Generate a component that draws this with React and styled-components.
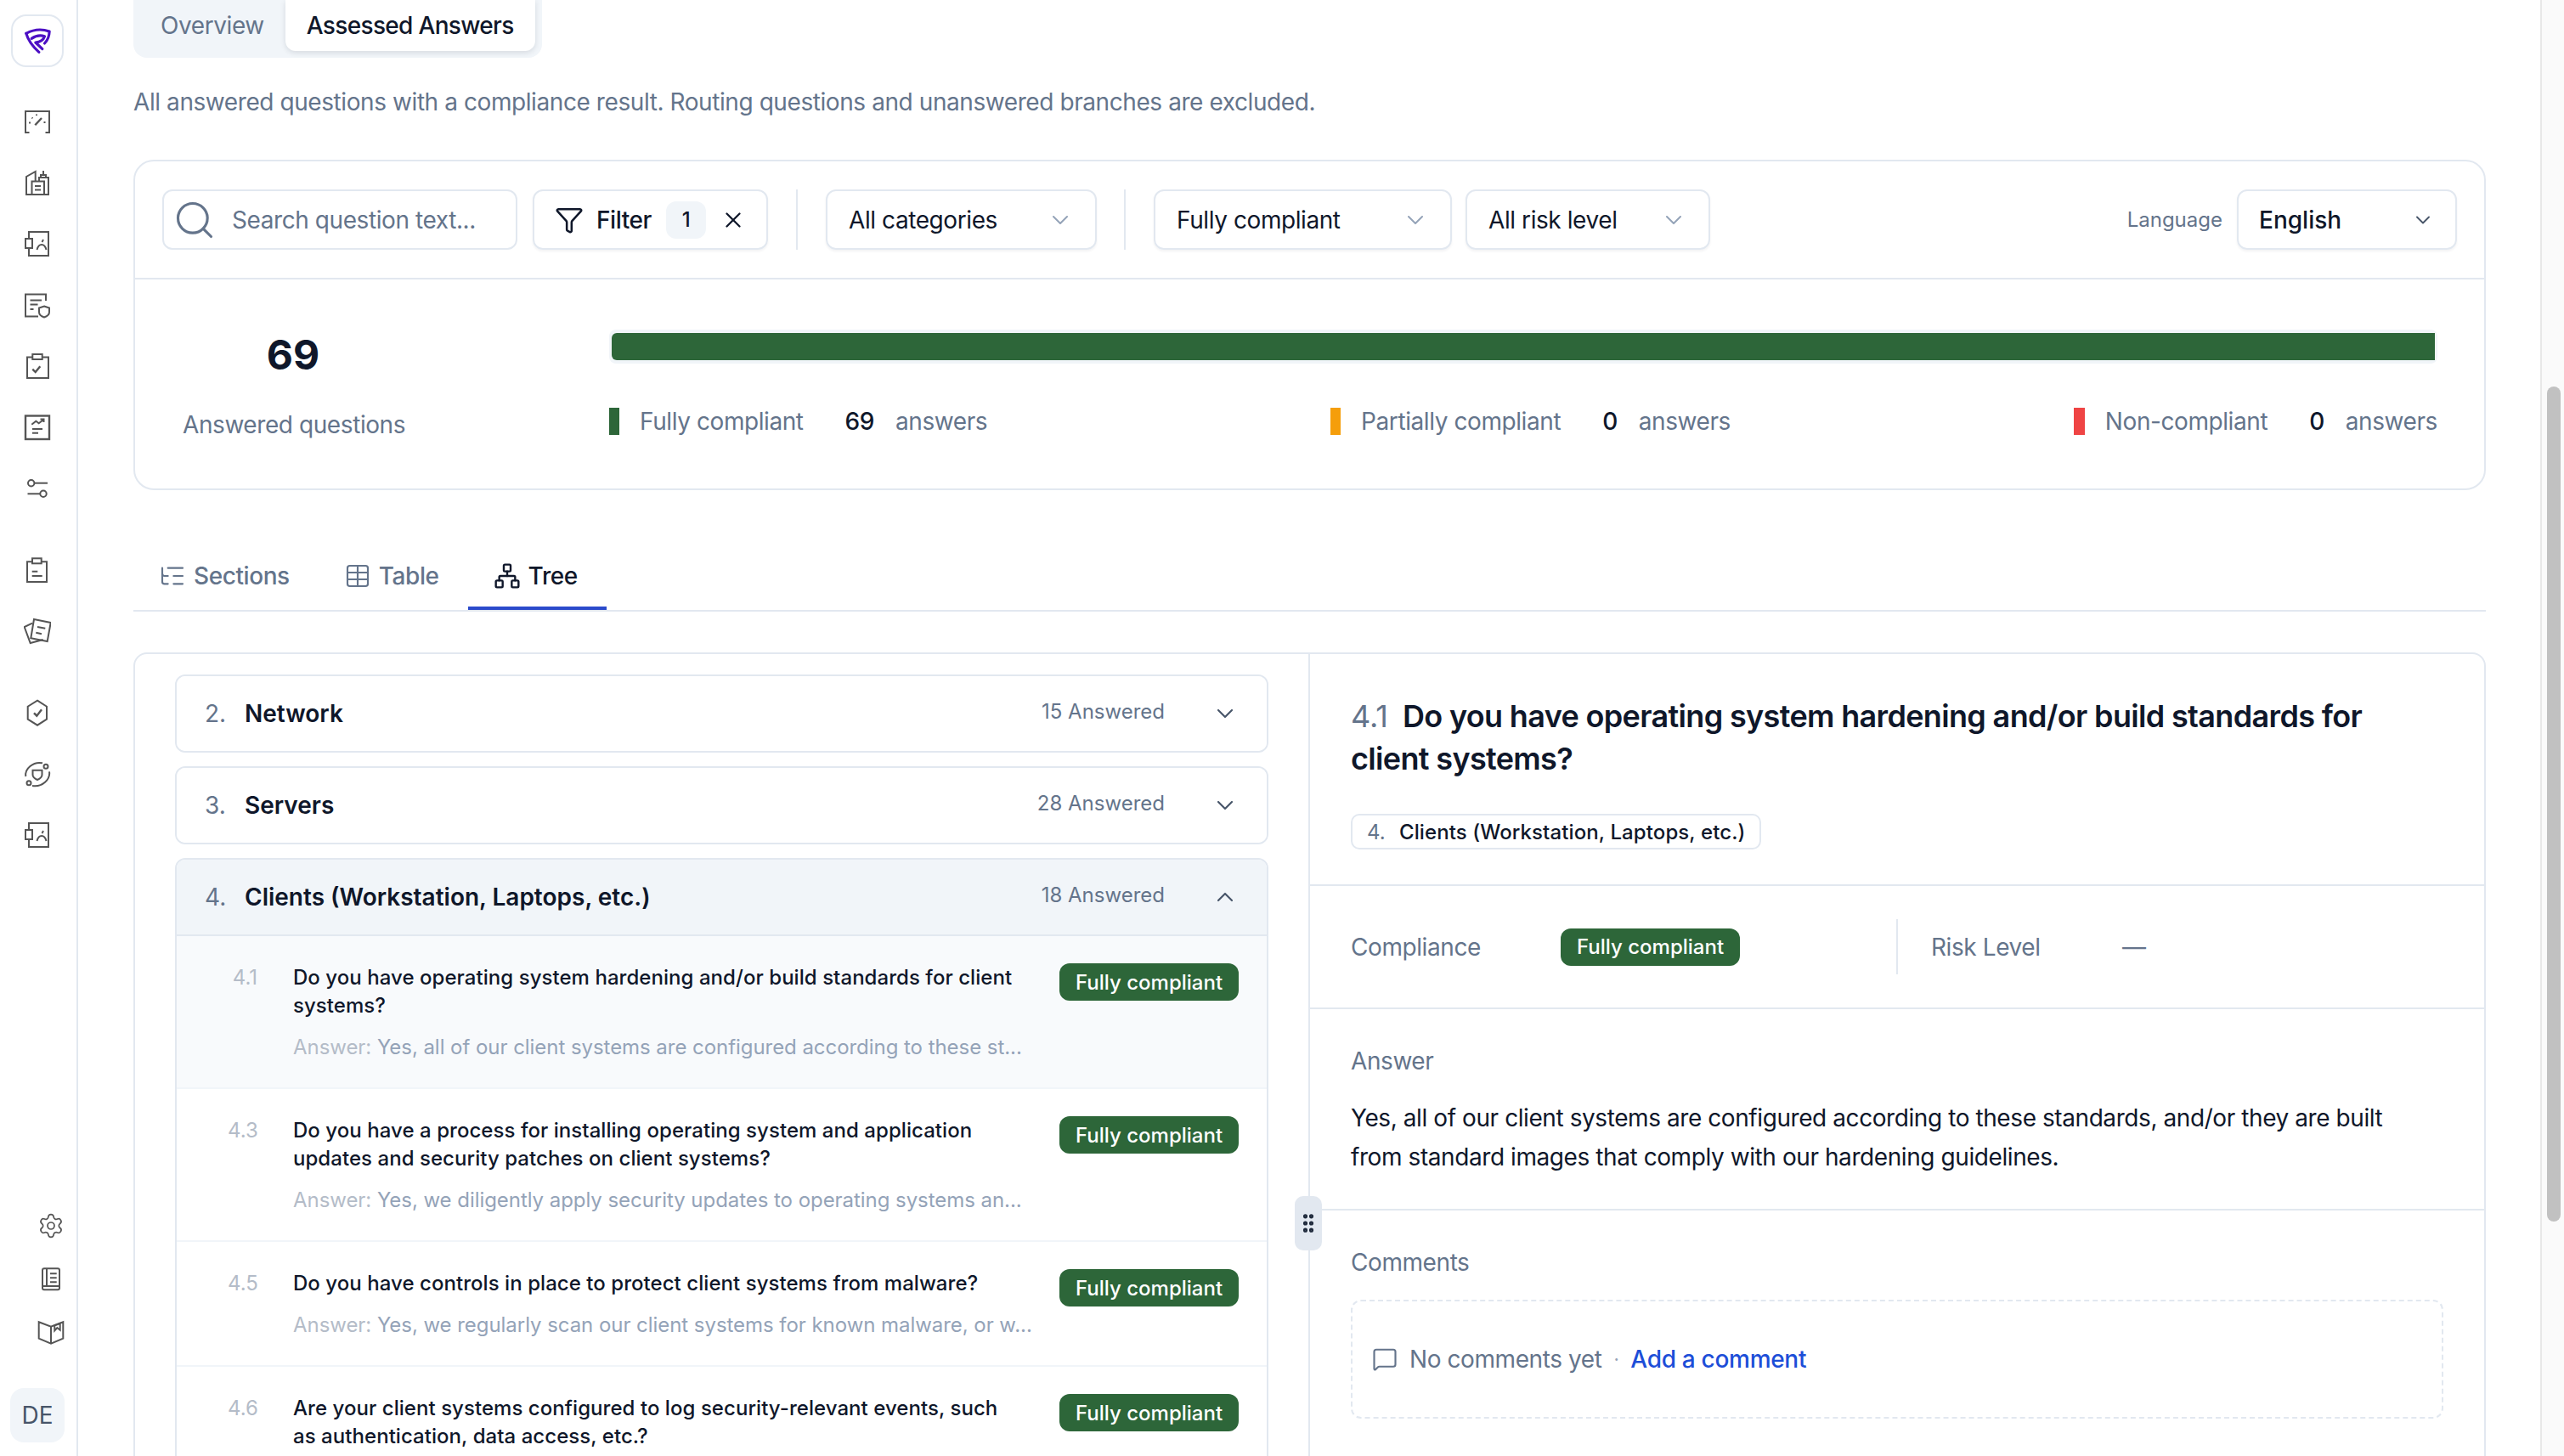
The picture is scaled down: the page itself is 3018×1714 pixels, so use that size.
import React from "react";
import styled, { createGlobalStyle } from "styled-components";
import {
  ChevronDown,
  ChevronUp,
  Funnel,
  GripVertical,
  ListTree,
  MessageSquare,
  Network,
  Search,
  Settings,
  Table,
  X,
} from "lucide-react";

const GlobalStyle = createGlobalStyle`
  * { box-sizing: border-box; }
  html, body { margin: 0; padding: 0; background: #fff; overflow: hidden; }
  body { font-family: Inter, "Liberation Sans", sans-serif; color: #0f172a; }
`;

const Page = styled.div`
  display: flex;
  width: 3018px;
  height: 1714px;
  overflow: hidden;
`;

/* ---------- sidebar ---------- */
const Sidebar = styled.aside`
  flex: none;
  width: 92px;
  display: flex;
  flex-direction: column;
  align-items: center;
  padding: 17px 2px 16px 0;
  border-right: 2px solid #e2e8f0;
`;
const LogoBox = styled.div`
  width: 62px;
  height: 62px;
  display: flex;
  align-items: center;
  justify-content: center;
  border: 2px solid #e2e8f0;
  border-radius: 18px;
  margin-bottom: 28px;
`;
const NavGroup = styled.div`
  display: flex;
  flex-direction: column;
  margin-bottom: 24px;
`;
const NavIcon = styled.div`
  width: 32px;
  height: 72px;
  display: flex;
  align-items: center;
  justify-content: center;
  color: #555;
`;
const Spacer = styled.div`
  flex: 1;
`;
const BottomGroup = styled.div`
  display: flex;
  flex-direction: column;
  padding-left: 32px;
  margin-bottom: 34px;
`;
const BottomIcon = styled(NavIcon)`
  height: 63px;
`;
const Avatar = styled.div`
  width: 64px;
  height: 64px;
  display: flex;
  align-items: center;
  justify-content: center;
  border-radius: 16px;
  background: #f1f5f9;
  color: #475569;
  font-size: 28px;
`;

const Line = ({ children }) => (
  <svg width="32" height="32" viewBox="0 0 32 32" fill="none" stroke="currentColor" strokeWidth="2">
    {children}
  </svg>
);

const GaugeIcon = () => (
  <Line>
    <path d="M6.5 29H2V4h28v25h-4.5" />
    <path d="M13.3 20.3 21 12" strokeWidth="2.4" />
    <path d="M6 17.6h2M9.5 11.5l1 .8M15 7.5v1.6M23.5 17h2" />
  </Line>
);
const BuildingIcon = () => (
  <Line>
    <path d="M3 30V9l10.7-6v11" />
    <path d="M2 30h28M29 30V10H18v4" />
    <path d="M20 10V7h6v3M23 7V2" />
    <path d="M9.5 30V14.5H24V30" />
    <path d="M13 20h7M13 24.5h7" />
  </Line>
);
const FrameIcon = () => (
  <Line>
    <path d="M6 10V2h23v28H6v-9" />
    <rect x="2" y="10" width="8" height="11" />
    <path d="M15.5 23c1-4 3-6 5.5-6s4.500 2 5.500 6" />
    <path d="M21.500 14l1.500-3" />
  </Line>
);
const DocShieldIcon = () => (
  <Line>
    <path d="M26 11V3.500H2v26h15" />
    <path d="M7.500 10.500H21M7.500 15.500h9M7.500 21h4" />
    <path d="M24 17.500l6 2v5c0 3-3 5-6 6-3-1-6-3-6-6v-5z" />
  </Line>
);
const ClipCheckIcon = () => (
  <Line>
    <path d="M10 5.500H4V30h25V5.500h-7" />
    <rect x="10.300" y="2" width="11.400" height="6" />
    <path d="M10.300 19.700l3.400 3.300 5.600-6.700" strokeWidth="2.400" />
  </Line>
);
const ReportIcon = () => (
  <Line>
    <rect x="2" y="2.500" width="28" height="27.500" strokeWidth="2.400" />
    <path d="M9.300 12.700l5-4 3.400 2.600 5.600-4.300M19.500 6.500h4v3.500" />
    <path d="M10 18h12M10 22.700h7" />
  </Line>
);
const SlidersIcon = () => (
  <Line>
    <circle cx="8.700" cy="9.700" r="3.700" />
    <path d="M12.500 9.700h15.500" />
    <path d="M4.500 22.300H19.300" />
    <circle cx="23" cy="22.300" r="3.700" />
  </Line>
);
const ClipboardIcon = () => (
  <Line>
    <path d="M10 6.300H4V30h23V6.300h-6" />
    <rect x="10" y="2.300" width="10.700" height="6" />
    <path d="M9.700 17.700h6.600M9.700 23h12" />
  </Line>
);
const CardsIcon = () => (
  <Line>
    <path d="M12 2l19.700 4-4 22-19.400-3.700z" />
    <path d="M10 6.700.7 11l7 19 15-4" />
    <path d="M16 11l9.300 1.700M14.300 17.700l6.700 1.600" />
  </Line>
);
const ShieldCheckIcon = () => (
  <Line>
    <path d="M16 1.700l11 7v15l-11 7-11.300-7v-15z" />
    <path d="M12 16.300l3.300 3.400 5.700-7.400" strokeWidth="2.400" />
  </Line>
);
const OrbitIcon = () => (
  <Line>
    <path d="M10.500 11.700h11v5.300c0 2.500-2.500 4.700-5.500 6-3-1.300-5.500-3.500-5.500-6z" />
    <path d="M2.300 19C.8 10 11 1 22 3.300" />
    <path d="M30 13.300c1.500 9-8 18.700-20 16.700" />
    <circle cx="26" cy="7.300" r="2.500" />
    <circle cx="6" cy="26.700" r="2.500" />
  </Line>
);
const BookIcon = () => (
  <Line>
    <path d="M8 3.300h16a2 2 0 0 1 2 2v21a2 2 0 0 1-2 2H8a2 2 0 0 1-2-2v-21a2 2 0 0 1 2-2z" />
    <path d="M11 3.300V24M6 24h20" />
    <path d="M15 9.300h7.700M15 14.300h7.700M15 19.300h7.700" />
  </Line>
);
const OpenBookIcon = () => (
  <Line>
    <path d="M1.700 3.300 16 8.700 30.300 3.300v19.400L16 28.700 1.700 22.700z" />
    <path d="M16 8.700v20" />
    <path d="M20.300 7.300 26.700 5v7.700L23.300 10l-3 3.300z" />
  </Line>
);
const ShieldLogo = () => (
  <svg width="31" height="30" viewBox="0 0 92 90" fill="none" stroke="#4c0fc4" strokeWidth="9.500" strokeLinejoin="round" strokeLinecap="round">
    <path d="M5 19Q45-3 87 12 86 38 70 54" />
    <path d="M5 19Q14 52 50 85" />
    <path d="M24 37Q46 22 70 29 64 48 38 51L62 74" />
  </svg>
);

/* ---------- main column ---------- */
const Main = styled.main`
  flex: 1;
  min-width: 0;
  padding: 0 64px 0 65px;
`;
const TopTabs = styled.div`
  display: inline-flex;
  height: 68px;
  padding: 0 8px 8px 7px;
  background: #f1f5f9;
  border-radius: 0 0 16px 16px;
`;
const TopTab = styled.div`
  height: 60px;
  padding: 0 25px;
  display: flex;
  align-items: center;
  font-size: 28px;
  letter-spacing: ${(p) => (p.$active ? "-0.67px" : "-0.42px")};
  font-weight: ${(p) => (p.$active ? 500 : 400)};
  color: ${(p) => (p.$active ? "#0f172a" : "#64748b")};
  background: ${(p) => (p.$active ? "#fff" : "transparent")};
  border-radius: ${(p) => (p.$active ? "0 0 12px 12px" : "0")};
  box-shadow: ${(p) => (p.$active ? "0 2px 6px rgba(15, 23, 42, 0.12)" : "none")};
`;
const Intro = styled.p`
  margin: 32px 0 48px;
  font-size: 28px;
  line-height: 40px;
  letter-spacing: -0.42px;
  color: #64748b;
`;

const Card = styled.section`
  height: 389px;
  border: 2px solid #e2e8f0;
  border-radius: 24px;
`;
const Toolbar = styled.div`
  height: 139px;
  display: flex;
  align-items: center;
  padding: 0 32px;
  border-bottom: 2px solid #e2e8f0;
`;
const Field = styled.div`
  height: 71px;
  flex: none;
  width: ${(p) => p.$w}px;
  display: flex;
  align-items: center;
  padding: 0 25px;
  border: 2px solid #e2e8f0;
  border-radius: 12px;
  box-shadow: 0 2px 3px rgba(15, 23, 42, 0.05);
  font-size: 28px;
  letter-spacing: -0.42px;
`;
const SearchField = styled(Field)`
  padding: 0 0 0 10px;
  gap: 18px;
  margin-right: 18px;
  color: #64748b;
  box-shadow: none;
`;
const FilterField = styled(Field)`
  padding-left: 24px;
  padding-right: 0;
  font-weight: 500;
`;
const FilterLabel = styled.span`
  margin: 0 17px 0 15px;
`;
const CountBadge = styled.span`
  width: 47px;
  height: 44px;
  display: flex;
  align-items: center;
  justify-content: center;
  background: #f1f5f9;
  border-radius: 12px;
  font-size: 24px;
  margin-right: 17px;
`;
const SelectField = styled(Field)`
  justify-content: space-between;
  margin-right: ${(p) => p.$mr || 0}px;
  color: #0f172a;
  svg { color: #94a3b8; }
`;
const LangField = styled(SelectField)`
  padding: 0 24px;
  font-weight: 500;
  letter-spacing: 0;
  svg { color: #475569; }
`;
const ToolDivider = styled.div`
  flex: none;
  width: 2px;
  height: 71px;
  background: #e2e8f0;
  margin: 0 33px;
`;
const LangLabel = styled.span`
  margin-left: auto;
  margin-right: 17px;
  font-size: 24px;
  color: #64748b;
`;

const StatsBody = styled.div`
  display: flex;
  padding: 0 55px 0 56px;
`;
const StatBlock = styled.div`
  flex: none;
  width: 260px;
  margin-right: 242px;
  padding-top: 59px;
  text-align: center;
`;
const StatValue = styled.div`
  font-size: 48px;
  line-height: 60px;
  font-weight: 700;
`;
const StatLabel = styled.div`
  margin-top: 32px;
  font-size: 28px;
  line-height: 40px;
  letter-spacing: -0.42px;
  white-space: nowrap;
  color: #64748b;
`;
const StatDetail = styled.div`
  flex: 1;
  padding-top: 59px;
`;
const BarTrack = styled.div`
  padding: 4px 3px;
  background: #f1f5f9;
  border-radius: 8px;
`;
const BarFill = styled.div`
  height: 32px;
  background: #2d6639;
  border-radius: 6px 0 0 6px;
`;
const Legend = styled.div`
  display: flex;
  justify-content: space-between;
  margin-top: 52px;
`;
const LegendItem = styled.div`
  display: flex;
  align-items: center;
  height: 32px;
  font-size: 28px;
  letter-spacing: -0.42px;
  color: #64748b;
`;
const LegendMark = styled.i`
  width: ${(p) => (p.$color === "#ef4444" ? 13 : 12)}px;
  height: 32px;
  margin-right: 24px;
  background: ${(p) => p.$color};
`;
const LegendCount = styled.b`
  margin: 0 25px 0 49px;
  font-weight: 500;
  color: #0f172a;
`;

const ViewTabs = styled.div`
  display: flex;
  margin-top: 61px;
  border-bottom: 2px solid #e2e8f0;
`;
const ViewTab = styled.div`
  height: 80px;
  display: flex;
  align-items: center;
  gap: 9px;
  padding: 4px 34px 0 30px;
  border-bottom: 4px solid ${(p) => (p.$active ? "#2b4acb" : "transparent")};
  font-size: 28px;
  letter-spacing: -0.42px;
  font-weight: 500;
  color: ${(p) => (p.$active ? "#0f172a" : "#64748b")};
`;

/* ---------- split panel ---------- */
const Split = styled.section`
  position: relative;
  display: grid;
  grid-template-columns: 1383px 1fr;
  height: 1100px;
  margin-top: 48px;
  border: 2px solid #e2e8f0;
  border-radius: 16px;
`;
const TreeCol = styled.div`
  display: flex;
  flex-direction: column;
  gap: 16px;
  padding: 24px 47px 0 47px;
  border-right: 2px solid #e2e8f0;
`;
const Accordion = styled.div`
  border: 2px solid #e2e8f0;
  border-radius: 12px;
  overflow: hidden;
`;
const AccordionHead = styled.div`
  height: ${(p) => (p.$open ? 90 : 88)}px;
  display: flex;
  align-items: center;
  padding: 0 33px;
  background: ${(p) => (p.$open ? "#f1f5f9" : "#fff")};
  border-bottom: ${(p) => (p.$open ? "2px solid #e2e8f0" : "0")};
  svg { color: #475569; }
`;
const SectionNum = styled.span`
  width: 47px;
  font-size: 28px;
  color: #64748b;
`;
const SectionName = styled.span`
  flex: 1;
  font-size: 28px;
  font-weight: 600;
`;
const AnsweredCount = styled.span`
  margin-right: 55px;
  padding-bottom: 6px;
  font-size: 24px;
  color: #64748b;
`;
const QuestionRow = styled.div`
  display: flex;
  align-items: flex-start;
  padding: 32px 30px 32px 60px;
  background: ${(p) => (p.$selected ? "#f8fafc" : "#fff")};
  border-bottom: 2px solid #f1f5f9;
`;
const QuestionNum = styled.span`
  flex: none;
  width: 35px;
  margin-right: 42px;
  text-align: right;
  font-size: 24px;
  line-height: 33px;
  color: #b4bcc8;
`;
const QuestionBody = styled.div`
  flex: none;
  width: 862px;
  margin-right: 40px;
`;
const QuestionText = styled.div`
  width: 855px;
  font-size: 24px;
  line-height: 33px;
  font-weight: 500;
  letter-spacing: 0.05px;
`;
const AnswerLine = styled.div`
  margin-top: 18px;
  font-size: 24px;
  line-height: 30px;
  letter-spacing: -0.05px;
  color: #94a3b8;
  white-space: nowrap;
  span { color: #b4bcc8; }
`;
const StatusBadge = styled.span`
  flex: none;
  height: 44px;
  display: inline-flex;
  align-items: center;
  padding: 0 19px;
  background: #2d6639;
  border-radius: 12px;
  color: #fff;
  font-size: 24px;
  font-weight: 500;
  white-space: nowrap;
`;
const Handle = styled.div`
  position: absolute;
  left: 1365px;
  top: 638px;
  width: 32px;
  height: 64px;
  display: flex;
  align-items: center;
  justify-content: center;
  background: #e2e8f0;
  border-radius: 10px;
  color: #1e293b;
`;

const DetailCol = styled.div`
  min-width: 0;
`;
const DetailHead = styled.div`
  padding: 48px 48px 41px;
  border-bottom: 2px solid #e2e8f0;
`;
const DetailTitle = styled.h2`
  margin: 0;
  font-size: 36px;
  line-height: 50px;
  font-weight: 600;
  letter-spacing: -0.66px;
  span {
    margin-right: 17px;
    font-weight: 400;
    letter-spacing: 0;
    color: #64748b;
  }
`;
const SectionChip = styled.div`
  display: inline-flex;
  align-items: center;
  height: 42px;
  margin-top: 40px;
  padding: 0 17px;
  border: 2px solid #e2e8f0;
  border-radius: 10px;
  font-size: 24px;
  font-weight: 500;
  letter-spacing: 0.1px;
  span {
    width: 38px;
    font-weight: 400;
    color: #64748b;
  }
`;
const MetaRow = styled.div`
  height: 145px;
  display: flex;
  align-items: center;
  padding: 0 48px;
  border-bottom: 2px solid #e2e8f0;
`;
const MetaCell = styled.div`
  flex: none;
  width: 642px;
  display: flex;
  align-items: center;
`;
const MetaLabel = styled.span`
  flex: none;
  width: ${(p) => p.$w}px;
  font-size: 28px;
  letter-spacing: -0.42px;
  color: #64748b;
`;
const MetaDivider = styled.div`
  flex: none;
  width: 2px;
  height: 65px;
  margin-right: 39px;
  background: #e2e8f0;
`;
const Dash = styled.span`
  font-size: 28px;
  color: #64748b;
`;
const DetailBlock = styled.div`
  padding: 41px 48px 38px;
  border-bottom: ${(p) => (p.$last ? "0" : "2px solid #e2e8f0")};
`;
const BlockLabel = styled.div`
  font-size: 28px;
  line-height: 40px;
  letter-spacing: -0.42px;
  color: #64748b;
`;
const AnswerText = styled.p`
  max-width: 1260px;
  margin: 24px 0 0;
  font-size: 28px;
  line-height: 46px;
  letter-spacing: -0.42px;
`;
const EmptyBox = styled.div`
  height: 140px;
  display: flex;
  align-items: center;
  margin-top: 24px;
  padding-left: 23px;
  border: 2px dashed #e2e8f0;
  border-radius: 12px;
  font-size: 28px;
  letter-spacing: -0.42px;
  color: #64748b;
`;
const EmptyText = styled.span`
  margin-left: 14px;
`;
const Dot = styled.span`
  margin: 0 14px;
  color: #94a3b8;
  font-size: 22px;
`;
const AddLink = styled.span`
  color: #1d4ed8;
  font-weight: 500;
  letter-spacing: -0.3px;
`;

const ScrollTrack = styled.div`
  flex: none;
  width: 28px;
  padding: 455px 0 0 6px;
  background: #fafafa;
  border-left: 2px solid #e8e8e8;
`;
const ScrollThumb = styled.div`
  width: 16px;
  height: 983px;
  background: #c1c1c1;
  border-radius: 8px;
`;

const navTop = [GaugeIcon, BuildingIcon, FrameIcon, DocShieldIcon, ClipCheckIcon, ReportIcon, SlidersIcon];
const navMiddle = [ClipboardIcon, CardsIcon];
const navLower = [ShieldCheckIcon, OrbitIcon, FrameIcon];

const questions = [
  {
    num: "4.1",
    text: "Do you have operating system hardening and/or build standards for client systems?",
    answer: "Yes, all of our client systems are configured according to these st...",
    selected: true,
  },
  {
    num: "4.3",
    text: "Do you have a process for installing operating system and application updates and security patches on client systems?",
    answer: "Yes, we diligently apply security updates to operating systems an...",
  },
  {
    num: "4.5",
    text: "Do you have controls in place to protect client systems from malware?",
    answer: "Yes, we regularly scan our client systems for known malware, or w...",
  },
  {
    num: "4.6",
    text: "Are your client systems configured to log security-relevant events, such as authentication, data access, etc.?",
  },
];

const NavList = ({ items }) => (
  <NavGroup>
    {items.map((Icon, i) => (
      <NavIcon key={i}>
        <Icon />
      </NavIcon>
    ))}
  </NavGroup>
);

const LegendEntry = ({ color, label, count }) => (
  <LegendItem>
    <LegendMark $color={color} />
    {label}
    <LegendCount>{count}</LegendCount>
    answers
  </LegendItem>
);

const App = () => (
  <Page>
    <GlobalStyle />
    <Sidebar>
      <LogoBox>
        <ShieldLogo />
      </LogoBox>
      <NavList items={navTop} />
      <NavList items={navMiddle} />
      <NavList items={navLower} />
      <Spacer />
      <BottomGroup>
        <BottomIcon>
          <Settings size={36} strokeWidth={1.3} />
        </BottomIcon>
        <BottomIcon>
          <BookIcon />
        </BottomIcon>
        <BottomIcon>
          <OpenBookIcon />
        </BottomIcon>
      </BottomGroup>
      <Avatar>DE</Avatar>
    </Sidebar>

    <Main>
      <TopTabs>
        <TopTab>Overview</TopTab>
        <TopTab $active>Assessed Answers</TopTab>
      </TopTabs>
      <Intro>All answered questions with a compliance result. Routing questions and unanswered branches are excluded.</Intro>

      <Card>
        <Toolbar>
          <SearchField $w={418}>
            <Search size={52} strokeWidth={1.45} />
            Search question text...
          </SearchField>
          <FilterField $w={277}>
            <Funnel size={34} strokeWidth={1.8} />
            <FilterLabel>Filter</FilterLabel>
            <CountBadge>1</CountBadge>
            <X size={30} strokeWidth={1.8} />
          </FilterField>
          <ToolDivider />
          <SelectField $w={319} $mr={-1}>
            All categories
            <ChevronDown size={32} strokeWidth={1.5} />
          </SelectField>
          <ToolDivider />
          <SelectField $w={351} $mr={16}>
            Fully compliant
            <ChevronDown size={32} strokeWidth={1.5} />
          </SelectField>
          <SelectField $w={288}>
            All risk level
            <ChevronDown size={32} strokeWidth={1.5} />
          </SelectField>
          <LangLabel>Language</LangLabel>
          <LangField $w={259}>
            English
            <ChevronDown size={28} strokeWidth={1.6} />
          </LangField>
        </Toolbar>
        <StatsBody>
          <StatBlock>
            <StatValue>69</StatValue>
            <StatLabel>Answered questions</StatLabel>
          </StatBlock>
          <StatDetail>
            <BarTrack>
              <BarFill />
            </BarTrack>
            <Legend>
              <LegendEntry color="#2d6639" label="Fully compliant" count="69" />
              <LegendEntry color="#f59e0b" label="Partially compliant" count="0" />
              <LegendEntry color="#ef4444" label="Non-compliant" count="0" />
            </Legend>
          </StatDetail>
        </StatsBody>
      </Card>

      <ViewTabs>
        <ViewTab>
          <ListTree size={32} strokeWidth={1.6} />
          Sections
        </ViewTab>
        <ViewTab>
          <Table size={32} strokeWidth={1.6} />
          Table
        </ViewTab>
        <ViewTab $active>
          <Network size={32} strokeWidth={1.8} />
          Tree
        </ViewTab>
      </ViewTabs>

      <Split>
        <TreeCol>
          <Accordion>
            <AccordionHead>
              <SectionNum>2.</SectionNum>
              <SectionName>Network</SectionName>
              <AnsweredCount>15 Answered</AnsweredCount>
              <ChevronDown size={32} strokeWidth={1.6} />
            </AccordionHead>
          </Accordion>
          <Accordion>
            <AccordionHead>
              <SectionNum>3.</SectionNum>
              <SectionName>Servers</SectionName>
              <AnsweredCount>28 Answered</AnsweredCount>
              <ChevronDown size={32} strokeWidth={1.6} />
            </AccordionHead>
          </Accordion>
          <Accordion>
            <AccordionHead $open>
              <SectionNum>4.</SectionNum>
              <SectionName>Clients (Workstation, Laptops, etc.)</SectionName>
              <AnsweredCount>18 Answered</AnsweredCount>
              <ChevronUp size={32} strokeWidth={1.6} />
            </AccordionHead>
            {questions.map((q) => (
              <QuestionRow key={q.num} $selected={q.selected}>
                <QuestionNum>{q.num}</QuestionNum>
                <QuestionBody>
                  <QuestionText>{q.text}</QuestionText>
                  {q.answer && (
                    <AnswerLine>
                      <span>Answer:</span> {q.answer}
                    </AnswerLine>
                  )}
                </QuestionBody>
                <StatusBadge>Fully compliant</StatusBadge>
              </QuestionRow>
            ))}
          </Accordion>
        </TreeCol>

        <DetailCol>
          <DetailHead>
            <DetailTitle>
              <span>4.1</span>Do you have operating system hardening and/or build standards for client systems?
            </DetailTitle>
            <SectionChip>
              <span>4.</span>Clients (Workstation, Laptops, etc.)
            </SectionChip>
          </DetailHead>
          <MetaRow>
            <MetaCell>
              <MetaLabel $w={247}>Compliance</MetaLabel>
              <StatusBadge>Fully compliant</StatusBadge>
            </MetaCell>
            <MetaDivider />
            <MetaLabel $w={225}>Risk Level</MetaLabel>
            <Dash>—</Dash>
          </MetaRow>
          <DetailBlock>
            <BlockLabel>Answer</BlockLabel>
            <AnswerText>
              Yes, all of our client systems are configured according to these standards, and/or they are built from standard images that comply with our hardening guidelines.
            </AnswerText>
          </DetailBlock>
          <DetailBlock $last>
            <BlockLabel>Comments</BlockLabel>
            <EmptyBox>
              <MessageSquare size={30} strokeWidth={1.7} />
              <EmptyText>No comments yet</EmptyText>
              <Dot>·</Dot>
              <AddLink>Add a comment</AddLink>
            </EmptyBox>
          </DetailBlock>
        </DetailCol>

        <Handle>
          <GripVertical size={28} strokeWidth={2.4} />
        </Handle>
      </Split>
    </Main>

    <ScrollTrack>
      <ScrollThumb />
    </ScrollTrack>
  </Page>
);

export default App;
